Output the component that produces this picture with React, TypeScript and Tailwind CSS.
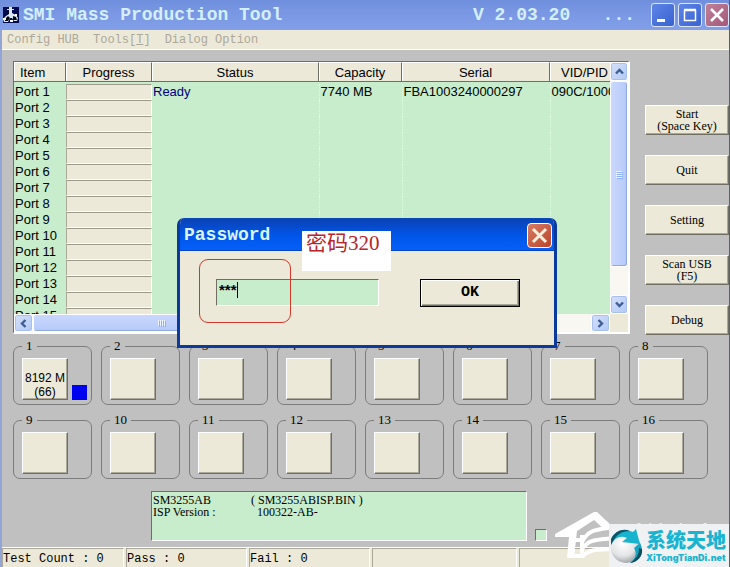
import { useState } from 'react'

const ports = Array.from({ length: 15 }, (_, i) => `Port ${i + 1}`)
const slots = Array.from({ length: 16 }, (_, i) => i + 1)

const actions = [
  { name: 'Start', hint: '(Space Key)' },
  { name: 'Quit', hint: '' },
  { name: 'Setting', hint: '' },
  { name: 'Scan USB', hint: '(F5)' },
  { name: 'Debug', hint: '' },
]

const columns = [
  { label: 'Item', width: 'w-[52px]', align: 'text-left pl-1.5' },
  { label: 'Progress', width: 'w-[86px]', align: 'text-center' },
  { label: 'Status', width: '', align: 'text-center' },
  { label: 'Capacity', width: 'w-[83px]', align: 'text-center' },
  { label: 'Serial', width: 'w-[148px]', align: 'text-center' },
  { label: 'VID/PID', width: 'w-[70px]', align: 'text-center' },
]

const mono = "font-['Liberation_Mono',monospace]"
const serif = "font-['Liberation_Serif',serif]"
const sans = "font-['Liberation_Sans',sans-serif]"
const raised = 'bg-[#ece9d8] border border-t-white border-l-white border-r-[#716f64] border-b-[#716f64] shadow-[inset_-1px_-1px_0_#aca899]'
const sunken = 'border border-t-[#716f64] border-l-[#716f64] border-r-white border-b-white'

function AppIcon() {
  return (
    <svg width="16" height="16" viewBox="0 0 16 16" aria-hidden="true">
      <rect width="16" height="16" fill="#000a50" />
      <path d="M6 0h3v2h2v1H9v3l4 2 2 3-1 3h-3l-2-3H7l-2 4H1l-1-3 3-3 3-2V3H4V2h2z" fill="#dce9f2" />
      <path d="M2 12l3-3 2 2-2 3H2zM10 9l3 1 1 3h-4zM4 6l2-1v2H4z" fill="#05070f" />
      <path d="M0 11h3v2H0zM7 13h3v2H7zM12 7h2v2h-2z" fill="#fff" />
    </svg>
  )
}

function Arrow({ d }: { d: string }) {
  return (
    <svg width="9" height="9" viewBox="0 0 9 9" fill="none" aria-hidden="true">
      <path d={d} stroke="#3f5e93" strokeWidth="2.4" />
    </svg>
  )
}

const arrowButton = 'flex items-center justify-center shrink-0 rounded-[3px] border border-white bg-gradient-to-br from-[#d5e1fb] to-[#b2c8f5] shadow-[inset_0_0_0_1px_#a9c0ee]'

function VerticalScroll() {
  return (
    <div className="flex flex-col bg-[#f8f7f1]">
      <button type="button" aria-label="Scroll up" className={`${arrowButton} h-[19px]`}>
        <Arrow d="M1 6.5L4.5 3L8 6.5" />
      </button>
      <div className="flex-[185] flex flex-col items-center justify-center gap-px rounded-[3px] border border-white bg-gradient-to-r from-[#c9d8fd] to-[#b6c9f8] shadow-[inset_-1px_-1px_0_#8fa8dc]">
        {[0, 1, 2, 3].map(i => (
          <span key={i} className="w-1.5 h-px bg-[#eef4fe] shadow-[1px_1px_0_#8cb0f8]" />
        ))}
      </div>
      <div className="flex-[28]" />
      <button type="button" aria-label="Scroll down" className={`${arrowButton} h-[19px]`}>
        <Arrow d="M1 2.5L4.5 6L8 2.5" />
      </button>
    </div>
  )
}

function HorizontalScroll() {
  return (
    <div className="flex bg-[#f8f7f1] min-w-0">
      <button type="button" aria-label="Scroll left" className={`${arrowButton} w-[19px]`}>
        <Arrow d="M6.5 1L3 4.5L6.5 8" />
      </button>
      <div className="w-[256px] flex items-center justify-center gap-px rounded-[3px] border border-white bg-gradient-to-b from-[#c9d8fd] to-[#b6c9f8] shadow-[inset_-1px_-1px_0_#8fa8dc]">
        {[0, 1, 2, 3].map(i => (
          <span key={i} className="h-1.5 w-px bg-[#eef4fe] shadow-[1px_1px_0_#8cb0f8]" />
        ))}
      </div>
      <div className="flex-1" />
      <button type="button" aria-label="Scroll right" className={`${arrowButton} w-[19px]`}>
        <Arrow d="M2.5 1L6 4.5L2.5 8" />
      </button>
    </div>
  )
}

function PortList() {
  return (
    <div className={`flex-1 min-w-0 h-[273px] grid grid-cols-[minmax(0,1fr)_18px] grid-rows-[minmax(0,1fr)_18px] ${sunken} border-r-2 border-b-2 bg-[#ece9d8]`}>
      <div className={`overflow-hidden bg-[#c7edcc] text-[13px] leading-4 text-black ${sans}`}>
        <table className="table-fixed w-[calc(100%+10px)] border-collapse">
          <thead>
            <tr>
              {columns.map(c => (
                <th key={c.label} className={`${c.width} p-0 pb-0.5 font-normal`}>
                  <div className={`h-5 leading-5 bg-[#ece9d8] border-t border-t-white border-r border-r-[#716f64] border-b border-b-[#716f64] shadow-[inset_1px_0_0_#fff] ${c.align}`}>
                    {c.label}
                  </div>
                </th>
              ))}
            </tr>
          </thead>
          <tbody>
            {ports.map((port, i) => (
              <tr key={port} className="h-4 whitespace-nowrap">
                <td className="p-0 pl-px">{port}</td>
                <td className="p-0">
                  <div className="h-4 bg-[#ece9d8] border border-t-[#9d9a8c] border-l-[#aca899] border-r-white border-b-white" />
                </td>
                <td className="p-0 pl-px text-[#000080]">{i === 0 && 'Ready'}</td>
                <td className="p-0 pl-px border-l border-dotted border-[#e4f6e6]">{i === 0 && '7740 MB'}</td>
                <td className="p-0 pl-px border-l border-dotted border-[#e4f6e6]">{i === 0 && 'FBA1003240000297'}</td>
                <td className="p-0 pl-px border-l border-dotted border-[#e4f6e6]">{i === 0 && '090C/1000'}</td>
              </tr>
            ))}
          </tbody>
        </table>
      </div>
      <VerticalScroll />
      <HorizontalScroll />
    </div>
  )
}

function Slot({ n }: { n: number }) {
  return (
    <fieldset className="min-w-0 h-[65px] border border-[#7c7c7c] rounded-[7px]">
      <legend className={`ml-2 px-1 text-[13px] leading-3 text-black ${serif}`}>{n}</legend>
      <div className="flex items-end gap-1 pl-2 pt-1.5">
        <button
          type="button"
          aria-label={`Slot ${n}`}
          className={`w-[46px] h-[42px] flex flex-col items-center justify-end overflow-hidden whitespace-nowrap text-[12px] leading-[14px] text-black ${raised} ${sans}`}
        >
          {n === 1 && (
            <>
              <span>8192 M</span>
              <span>(66)</span>
            </>
          )}
        </button>
        {n === 1 && <span className="w-[15px] h-[15px] bg-[#0000f0]" />}
      </div>
    </fieldset>
  )
}

function PasswordDialog() {
  const [password, setPassword] = useState('***')

  return (
    <div role="dialog" aria-label="Password" className="absolute left-[177px] top-[218px] w-[380px] h-[130px] flex flex-col rounded-t-[7px] border-[3px] border-t-0 border-[#0a3a9c] bg-[#ece9d8] overflow-hidden">
      <div className="h-[33px] shrink-0 flex items-center justify-between pl-1 pr-0.5 bg-gradient-to-b from-[#0a43b8] via-[#0055e8] to-[#0560f8] border-t-2 border-t-[#0a47b4] border-b border-b-[#0744c4]">
        <h2 className={`text-[18px] leading-6 font-bold text-[#d8f4ff] ${mono}`}>Password</h2>
        <button type="button" aria-label="Close" className="w-[25px] h-[25px] flex items-center justify-center rounded-[4px] border border-white bg-gradient-to-br from-[#d87a62] to-[#b84428]">
          <svg width="17" height="17" viewBox="0 0 17 17" aria-hidden="true">
            <path d="M2 2L15 15M15 2L2 15" stroke="#ffeedd" strokeWidth="3" />
          </svg>
        </button>
      </div>
      <form className="flex items-start justify-between pt-7 pl-9 pr-[34px]" onSubmit={e => e.preventDefault()}>
        <label className="flex">
          <span className="sr-only">Password</span>
          <span className={`relative w-[163px] h-[27px] ${sunken} bg-[#c7edcc]`}>
            <input
              value={password}
              onChange={e => setPassword(e.target.value)}
              className={`block w-full h-5 pl-0.5 bg-transparent text-[15px] leading-5 font-bold text-black outline-none ${sans}`}
            />
            <span className="absolute left-5 top-0.5 w-px h-4 bg-black" />
          </span>
        </label>
        <button type="submit" className={`w-[100px] h-[28px] border border-black bg-[#ece9d8] shadow-[inset_1px_1px_0_#fff,inset_-1px_-1px_0_#716f64,inset_-2px_-2px_0_#aca899] text-[15px] leading-5 font-bold text-black ${mono}`}>
          OK
        </button>
      </form>
    </div>
  )
}

function Watermark() {
  return (
    <div className="absolute right-0 bottom-0 w-[174px] h-[55px]">
      <svg className="absolute left-0 top-0" width="62" height="50" viewBox="0 0 62 50" fill="none" aria-hidden="true">
        <path d="M0 22L39 0H42L57 14V18H50L39 8L22 19L19 46H12L14 25H0Z" fill="#fff" />
        <path d="M15 28H27M14 44H27V23M27 30C34 17 40 18 60 15M27 37C34 27 40 28 60 26M27 45C34 37 40 38 60 37" stroke="#fff" strokeWidth="4" />
      </svg>
      <span className="absolute left-[66px] top-2 text-[24px] leading-7 font-bold text-white font-['Noto_Sans_CJK_SC',sans-serif]">系统之家</span>
      <div className="absolute right-0 bottom-0 w-[120px] h-[43px] flex items-center gap-0.5 bg-[#f0f1f2]">
        <svg width="35" height="36" viewBox="0 0 35 36" aria-hidden="true">
          <defs>
            <radialGradient id="ball" cx="0.4" cy="0.35" r="0.7">
              <stop offset="0" stopColor="#fff" />
              <stop offset="0.6" stopColor="#e2e4e6" />
              <stop offset="1" stopColor="#989ca0" />
            </radialGradient>
          </defs>
          <circle cx="17" cy="20" r="15" fill="url(#ball)" />
          <path d="M2 12C5 3 14 0 24 4L27 1L31 16L13 14L18 10C12 7 6 9 2 17Z" fill="#18b4cf" />
          <path d="M2 11C6 3 14 0 21 3C13 3 7 6 2 17Z" fill="#0c5569" />
          <path d="M31 15C36 24 31 33 21 35C27 30 28 25 25 20Z" fill="#14a5c0" />
          <path d="M33 21C34 28 29 34 21 35C27 31 30 27 30 20Z" fill="#0b4c5e" />
        </svg>
        <div className="flex flex-col text-[#18b4d2]">
          <span className="text-[20px] leading-6 font-black font-['Noto_Sans_CJK_SC',sans-serif]">系统天地</span>
          <span className="text-[9px] leading-3 font-black font-['Inter',sans-serif]">XiTongTianDi.net</span>
        </div>
      </div>
    </div>
  )
}

export default function App() {
  const statusCell = 'h-full border border-t-[#aca899] border-l-[#aca899] border-r-white border-b-white'
  const windowButton = 'w-6 h-6 flex items-center justify-center rounded-[3px] border border-[#dbe5fb]'

  return (
    <div className="relative w-full overflow-hidden bg-[#c0c0c0] border-r border-r-[#5a5f6e]">
      <header className="h-[30px] flex items-center bg-gradient-to-b from-[#6f8fdc] via-[#7b98e4] to-[#829fe8] pl-[3px]">
        <AppIcon />
        <h1 className={`flex-1 ml-1 text-[18px] leading-6 text-[#d3effc] font-bold whitespace-pre ${mono}`}>SMI Mass Production Tool</h1>
        <span className={`mr-4 text-[18px] leading-6 text-[#d3effc] font-bold whitespace-pre ${mono}`}>V 2.03.20   ...</span>
        <div className="flex gap-[3px]">
          <button type="button" aria-label="Minimize" className={`${windowButton} bg-gradient-to-br from-[#5d85e8] to-[#3a62cf]`}>
            <svg width="16" height="16" viewBox="0 0 16 16" aria-hidden="true"><path d="M2 12h8v3H2z" fill="#fff" /></svg>
          </button>
          <button type="button" aria-label="Maximize" className={`${windowButton} bg-gradient-to-br from-[#5d85e8] to-[#3a62cf]`}>
            <svg width="16" height="16" viewBox="0 0 16 16" fill="none" aria-hidden="true"><path d="M2.500 3.500h11v10h-11zM2 2.500h12" stroke="#fff" strokeWidth="1.500" /></svg>
          </button>
          <button type="button" aria-label="Close" className={`${windowButton} bg-gradient-to-br from-[#c08097] to-[#a3587a]`}>
            <svg width="16" height="16" viewBox="0 0 16 16" aria-hidden="true"><path d="M2 2L14 14M14 2L2 14" stroke="#fff" strokeWidth="2.6" /></svg>
          </button>
        </div>
      </header>

      <div className="border-l-2 border-l-[#93a5d6]">
        <nav className={`h-5 flex gap-[14px] pl-[5px] text-[12px] leading-5 text-[#aca899] bg-[#ece9d8] border-b border-b-white ${mono}`}>
          <button type="button">Config HUB</button>
          <button type="button">Tools[<u>T</u>]</button>
          <button type="button">Dialog Option</button>
        </nav>

        <main className="pt-[11px]">
          <div className="flex gap-[15px] pl-[11px]">
            <PortList />
            <div className="w-[84px] pt-11 flex flex-col gap-5">
              {actions.map(a => (
                <button key={a.name} type="button" className={`h-[30px] shrink-0 flex flex-col items-center justify-center text-[12px] leading-3 text-black ${raised} ${serif}`}>
                  <span>{a.name}</span>
                  {a.hint && <span>{a.hint}</span>}
                </button>
              ))}
            </div>
          </div>

          <div className="grid grid-cols-8 gap-[9px] mt-[5px] pl-[11px] pr-[21px]">
            {slots.map(n => <Slot key={n} n={n} />)}
          </div>

          <div className="flex items-end gap-2 mt-3 pl-[149px] pr-[182px]">
            <div className={`flex-1 h-[50px] pl-px pt-0.5 bg-[#c7edcc] text-[12px] leading-3 text-black whitespace-nowrap ${sunken} ${serif}`}>
              <div className="grid grid-cols-[98px_1fr]">
                <span>SM3255AB</span>
                <span>( SM3255ABISP.BIN )</span>
                <span>ISP Version :</span>
                <span className="pl-1.5">100322-AB-</span>
              </div>
            </div>
            <span className={`w-3 h-3 bg-[#c7edcc] ${sunken}`} />
          </div>
        </main>

        <footer className={`mt-1.5 h-5 grid grid-cols-[122px_121px_121px_145px_1fr] gap-0.5 bg-[#ece9d8] text-[12px] leading-5 text-black whitespace-nowrap border-t border-t-white ${mono}`}>
          <span className={statusCell}>Test Count : 0</span>
          <span className={statusCell}>Pass : 0</span>
          <span className={statusCell}>Fail : 0</span>
          <span className={statusCell} />
          <span className={statusCell} />
        </footer>
      </div>

      <PasswordDialog />

      {/* notes drawn over the dialog */}
      <div className="absolute left-[199px] top-[259px] w-[92px] h-16 rounded-[9px] border border-[#d0382c] pointer-events-none" />
      <div className="absolute left-[302px] top-[231px] w-[89px] h-10 pl-1 bg-white text-[21px] leading-6 text-[#b8252a] whitespace-nowrap font-['Liberation_Serif','Noto_Sans_CJK_SC',serif]">
        密码320
      </div>

      <Watermark />
    </div>
  )
}
